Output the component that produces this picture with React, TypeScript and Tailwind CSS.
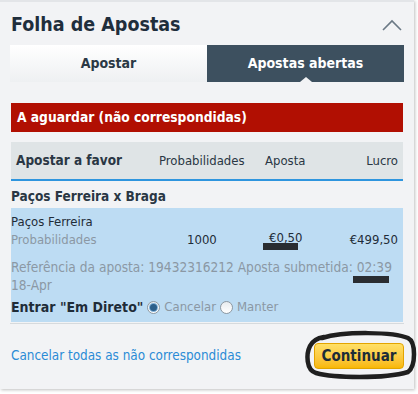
import React from "react";

const font = { fontFamily: '"DejaVu Sans Condensed", "DejaVu Sans", Tahoma, sans-serif' };

function ChevronUp() {
  return (
    <svg width="20" height="12" viewBox="0 0 20 12" className="text-[#6b7985]">
      <path d="M1 11 L10 2 L19 11" fill="none" stroke="currentColor" strokeWidth="1.6" />
    </svg>
  );
}

function Radio({ checked }: { checked?: boolean }) {
  return (
    <span className="inline-flex h-[13px] w-[13px] items-center justify-center rounded-full border border-[#8d98a1] bg-gradient-to-b from-[#e8ecef] to-white">
      {checked && <span className="h-[7px] w-[7px] rounded-full bg-[#2c5f8a] ring-1 ring-[#7fb0d8]" />}
    </span>
  );
}

export default function App() {
  return (
    <div style={font} className="h-[394px] w-[418px] bg-white">
      <div className="relative h-[389px] w-[414px] border-t-2 border-[#e3e5e8] bg-[#f2f3f5] shadow-[1px_1px_3px_rgba(0,0,0,0.25)]">
        {/* title */}
        <div className="flex h-[43px] items-center justify-between pl-[11px] pr-[12px] pt-[3px]">
          <h1 className="text-[19.5px] font-bold text-[#1f2e3c]">Folha de Apostas</h1>
          <ChevronUp />
        </div>

        {/* tabs */}
        <div className="mx-[10px] flex h-[37px]">
          <div className="flex flex-1 items-center justify-center bg-gradient-to-b from-white to-[#eef0f2] text-[14px] font-bold text-[#2b3945]">
            Apostar
          </div>
          <div className="relative flex flex-1 items-center justify-center bg-[#3d505f] text-[14px] font-bold text-white">
            Apostas abertas
            <span className="absolute bottom-0 left-1/2 h-0 w-0 -translate-x-1/2 border-x-[6px] border-b-[5px] border-x-transparent border-b-[#f2f3f5]" />
          </div>
        </div>

        {/* status bar */}
        <div className="mx-[11px] mt-[21px] flex h-[29px] items-center bg-[#b10f02] pl-[6px] text-[13.7px] font-bold text-white">
          A aguardar (não correspondidas)
        </div>

        {/* header row */}
        <div className="mx-[11px] mt-[10px] flex h-[39px] items-center border-b-2 border-[#2e95de] bg-[#dfe4e6] pl-[5px] pr-[5px] text-[13px] text-[#2a3744]">
          <span className="w-[143px] text-[13.5px] font-bold">Apostar a favor</span>
          <span className="w-[106px]">Probabilidades</span>
          <span className="flex-1">Aposta</span>
          <span>Lucro</span>
        </div>

        <div className="ml-[11px] mt-[5px] text-[13.5px] font-bold text-[#2a3744]">Paços Ferreira x Braga</div>

        {/* bet panel */}
        <div className="relative mx-[11px] mt-[2px] bg-[#bddcf3] pb-[6px] pr-[5px] pt-[5px] text-[13px] leading-[18px]">
          <div className="text-[#1f2c38]">Paços Ferreira</div>
          <div className="flex items-center">
            <span className="w-[176px] text-[#8b98a4]">Probabilidades</span>
            <span className="w-[82px] text-[#1f2c38]">1000</span>
            <span className="-mt-[4px] flex-1 text-[#1f2c38]">€0,50</span>
            <span className="text-[#1f2c38]">€499,50</span>
          </div>
          <div className="mt-[9px] text-[13.6px] text-[#8b98a4]">
            Referência da aposta: 19432316212 Aposta submetida: 02:39
            <br />
            18-Apr
          </div>
          <div className="mt-[4px] flex items-center gap-[4px] text-[#8b98a4]">
            <span className="text-[14px] font-bold text-[#1f2c38]">Entrar "Em Direto"</span>
            <Radio checked />
            <span>Cancelar</span>
            <Radio />
            <span>Manter</span>
          </div>
          {/* redaction marks */}
          <span className="absolute left-[252px] top-[35px] h-[7px] w-[35px] bg-[#2a2d31]" />
          <span className="absolute left-[342px] top-[68px] h-[7px] w-[36px] bg-[#2a2d31]" />
        </div>
        <div className="mx-[10px] mt-[1px] h-px bg-[#d6dadd]" />

        {/* footer */}
        <div className="mt-[19px] flex items-center justify-between pl-[11px] pr-[10px]">
          <a className="text-[13.4px] text-[#2b8bd6]">Cancelar todas as não correspondidas</a>
          <div className="relative">
            <button className="h-[26px] w-[90px] rounded-[4px] border border-[#e3a400] bg-gradient-to-b from-[#ffe066] to-[#f8b800] text-[15px] font-bold text-[#1d2c38]">
              Continuar
            </button>
            <svg className="pointer-events-none absolute -left-[10px] -top-[13px]" width="114" height="50" viewBox="0 0 114 50">
              <path
                d="M18 8 C40 1 90 2 104 8 C112 12 112 36 104 42 C80 49 30 48 12 43 C2 40 2 24 6 16 C9 10 14 8 20 7"
                fill="none"
                stroke="#1f1f1f"
                strokeWidth="4.5"
                strokeLinecap="round"
              />
            </svg>
          </div>
        </div>
      </div>
    </div>
  );
}
